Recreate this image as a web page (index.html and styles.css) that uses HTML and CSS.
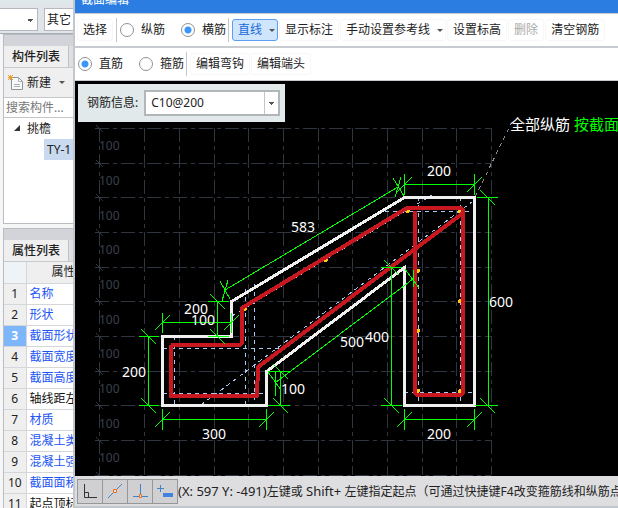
FILE: index.html
```html
<!DOCTYPE html>
<html lang="zh-CN">
<head>
<meta charset="utf-8">
<title>截面编辑</title>
<link rel="stylesheet" href="styles.css">
</head>
<body>
<div class="app">
  <header class="app-bar">
    <select class="combo combo-floor" aria-label="楼层"><option></option></select>
    <select class="combo combo-type" aria-label="构件类型"><option>其它</option></select>
  </header>
  <main class="side">
    <section class="panel">
      <div class="panel-grip"></div>
      <h2 class="tabs"><span class="tab">构件列表</span></h2>
      <div class="panel-tools">
        <button class="new-btn" type="button">
          <svg width="16" height="16" viewBox="0 0 16 16" aria-hidden="true">
            <path d="M3.500 2.500h7l4 4v8h-11z" fill="#f7f9fa" stroke="#8b969c"/>
            <path d="M10.500 2.500v4h4M6 9.500h6M6 11.500h6" fill="none" stroke="#a9b2b7"/>
            <path d="M0 0h1v1H0zM2 0h1v1H2zM4 0h1v1H4zM1 1h3v3H1zM0 2h1v1H0zM4 2h1v1H4zM0 4h1v1H0zM2 4h1v1H2zM4 4h1v1H4z" fill="#ee9c2b"/>
          </svg>
          新建<span class="caret"></span>
        </button>
      </div>
      <input class="search" type="text" placeholder="搜索构件..." aria-label="搜索构件">
      <ul class="tree">
        <li><span class="tree-parent"><svg width="7" height="7" viewBox="0 0 7 7" aria-hidden="true"><path d="M6 0v6H0z" fill="#333"/></svg>挑檐</span>
          <ul><li class="tree-leaf">TY-1</li></ul>
        </li>
      </ul>
    </section>
    <section class="panel">
      <div class="panel-grip"></div>
      <h2 class="tabs"><span class="tab">属性列表</span></h2>
      <table class="props">
        <thead><tr><th></th><th>属性名称</th></tr></thead>
        <tbody>
          <tr><th>1</th><td>名称</td></tr>
          <tr><th>2</th><td>形状</td></tr>
          <tr class="current"><th>3</th><td>截面形状</td></tr>
          <tr><th>4</th><td>截面宽度</td></tr>
          <tr><th>5</th><td>截面高度</td></tr>
          <tr class="plain"><th>6</th><td>轴线距左</td></tr>
          <tr><th>7</th><td>材质</td></tr>
          <tr><th>8</th><td>混凝土类</td></tr>
          <tr><th>9</th><td>混凝土强</td></tr>
          <tr><th>10</th><td>截面面积</td></tr>
          <tr class="plain"><th>11</th><td>起点顶标</td></tr>
        </tbody>
      </table>
    </section>
  </main>
</div>

<section class="dialog" aria-label="截面编辑">
  <h1 class="title">截面编辑</h1>
  <div class="toolbar">
    <button class="tool" type="button">选择</button>
    <span class="sep"></span>
    <label class="radio radio-long"><input type="radio" name="bar">纵筋</label>
    <label class="radio"><input type="radio" name="bar" checked>横筋</label>
    <span class="sep"></span>
    <button class="tool active" type="button">直线<span class="caret"></span></button>
    <button class="tool" type="button">显示标注</button>
    <button class="tool" type="button">手动设置参考线<span class="caret"></span></button>
    <button class="tool" type="button">设置标高</button>
    <button class="tool" type="button" disabled>删除</button>
    <button class="tool" type="button">清空钢筋</button>
  </div>
  <div class="toolbar toolbar-second">
    <label class="radio radio-long"><input type="radio" name="kind" checked>直筋</label>
    <label class="radio"><input type="radio" name="kind">箍筋</label>
    <span class="sep"></span>
    <button class="tool" type="button">编辑弯钩</button>
    <button class="tool" type="button">编辑端头</button>
  </div>
  <div class="canvas">
    <svg class="drawing" viewBox="75 81 543 395" preserveAspectRatio="xMinYMin slice" role="img" aria-label="挑檐截面">
      <g class="grid">
        <path d="M99.500 128V475M144.500 128V475M179.500 128V475M214.500 128V475M248.500 128V475M283.500 128V475M318.500 128V475M352.500 128V475M387.500 128V475M422.500 128V475M456.500 128V475M491.500 128V475"/>
        <path d="M95 128.500H491M95 163.500H491M95 197.500H491M95 232.500H491M95 267.500H491M95 301.500H491M95 336.500H491M95 371.500H491M95 405.500H491M95 440.500H491M95 475.500H491"/>
      </g>
      <path class="grid-tick" d="M96 125l7 7M96 160l7 7M96 194l7 7M96 229l7 7M96 264l7 7M96 298l7 7M96 333l7 7M96 368l7 7M96 402l7 7M96 437l7 7M96 472l7 7"/>
      <g class="grid-text">
        <text x="99" y="150">100</text><text x="99" y="185">100</text><text x="99" y="220">100</text><text x="99" y="254">100</text><text x="99" y="289">100</text><text x="99" y="324">100</text><text x="99" y="358">100</text><text x="99" y="393">100</text><text x="99" y="428">100</text><text x="99" y="462">100</text>
      </g>
      <path class="leader" d="M475 197L511 124"/>
      <path class="guide" d="M174.500 336V405M163 348.500H284M163 393.500H266M245.500 289V405M254.500 284V405M418.500 197V405M460.500 197V405M385 211.500H475M404 392.500H475M201 405L472 202M232 316L432 195"/>
      <path class="outline" d="M162.500 336.500H231.500V301.500L404.500 197.500H474.500V405.500H404.500V267.500L266.500 371.500V405.500H162.500Z"/>
      <g class="spots">
        <circle cx="245" cy="309" r="2"/><circle cx="326" cy="260" r="2"/><circle cx="408" cy="211" r="2"/><circle cx="418" cy="271" r="2"/><circle cx="460" cy="301" r="2"/><circle cx="418" cy="331" r="2"/><circle cx="418" cy="391" r="2"/><circle cx="460" cy="391" r="2"/><circle cx="460" cy="211" r="2"/>
      </g>
      <path class="rebar" d="M171 345H240L242 343V308L407 208H461L463 210V393L461 395H417L415 393V211M463 213L258 367L257 396H171V345"/>
      <g class="dim">
        <path d="M404.500 184.500H474.500M404.500 174V195M474.500 174V195M397 192l15-15M467 192l15-15"/>
        <path d="M488.500 197.500V405.500M477 197.500h21M475 405.500h23M480 190l15 15M480 398l15 15"/>
        <path d="M404.500 419.500H474.500M404.500 409V430M474.500 409V430M397 427l15-15M467 427l15-15"/>
        <path d="M162.500 419.500H266.500M162.500 409V430M266.500 409V430M155 427l15-15M259 427l15-15"/>
        <path d="M148.500 336.500V405.500M139 336.500h20M139 405.500h20M141 329l15 15M141 398l15 15"/>
        <path d="M162.500 322.500H231.500M162.500 313V333M231.500 313V333M155 330l15-15M224 330l15-15"/>
        <path d="M217.500 301.500V336.500M208 301.500h21M208 336.500h21M210 294l15 15M210 329l15 15"/>
        <path d="M280.500 371.500V405.500M268 371.500h22M268 405.500h22M273 364l15 15M273 398l15 15"/>
        <path d="M391.500 267.500V405.500M381 267.500h21M381 405.500h21M384 260l15 15M384 398l15 15"/>
        <path d="M225 290L398 187M220 281l10 18M393 178l11 18M228 280l-6 21M401 177l-6 20"/>
        <path d="M275 383L413 279M268 372l13 18M405 269l14 19M275 372v24M413 270v17"/>
      </g>
      <g class="dim-text">
        <text x="427" y="176">200</text><text x="489" y="307">600</text><text x="427" y="439">200</text><text x="202" y="439">300</text><text x="122" y="377">200</text><text x="184" y="314">200</text><text x="191" y="325">100</text><text x="281" y="394">100</text><text x="365" y="342">400</text><text x="340" y="347">500</text><text x="291" y="232">583</text>
      </g>
      <text class="note" x="510" y="130">全部纵筋</text>
      <text class="note note-link" x="574" y="130">按截面</text>
    </svg>
    <div class="info">
      <label for="rebar-info">钢筋信息:</label>
      <select id="rebar-info" class="combo combo-info"><option>C10@200</option></select>
    </div>
  </div>
  <footer class="status">
    <button class="snap" type="button" aria-label="正交"><svg width="18" height="18" viewBox="0 0 18 18"><path d="M3.500 2v13.500H16M3.500 10.500h4v5" fill="none" stroke="#333"/></svg></button>
    <button class="snap" type="button" aria-label="中点"><svg width="18" height="18" viewBox="0 0 18 18"><path d="M2 16L16 2" stroke="#3f83cc"/><path d="M7.500 7.500h3v3h-3z" fill="#dedee0" stroke="#f0701c"/></svg></button>
    <button class="snap" type="button" aria-label="垂点"><svg width="18" height="18" viewBox="0 0 18 18"><path d="M9.500 2v13M2 14.500h15" stroke="#3f83cc"/><path d="M8.500 12.500h2v3h-2z" fill="#dedee0" stroke="#f0701c"/></svg></button>
    <button class="snap" type="button" aria-label="动态输入"><svg width="18" height="18" viewBox="0 0 18 18"><path d="M1 6.500h7M4.500 3v7" stroke="#3f83cc"/><path d="M7 11h10v4H7z" fill="#3f83dc"/></svg></button>
    <span class="hint"><span class="keys">(X: 597 Y: -491)</span>左键或<span class="keys"> Shift+ </span>左键指定起点（可通过快捷键F4改变箍筋线和纵筋点</span>
  </footer>
</section>
</body>
</html>
```
FILE: styles.css
```css
* { box-sizing: border-box; }
body {
  margin: 0;
  height: 100vh;
  overflow: hidden;
  position: relative;
  background: #f6f6f7;
  color: #222;
  font: 12px/16px "Noto Sans", "Noto Sans CJK SC", sans-serif;
}
button, input, select { font: inherit; color: inherit; margin: 0; }
button { border: 0; padding: 0; background: none; white-space: nowrap; }
h1, h2, ul { margin: 0; padding: 0; font: inherit; list-style: none; }

.caret {
  border: 3px solid transparent;
  border-top-color: #555;
  border-bottom: 0;
}

/* Main window behind the dialog */
.app-bar {
  display: flex;
  gap: 6px;
  height: 34px;
  padding: 4px 0 2px;
  border-top: 4px solid #dfe8ea;
  border-bottom: 1px solid #a8adb5;
  background: #e1e4e9;
}
.combo {
  appearance: none;
  height: 23px;
  border: 1px solid #b4b8bd;
  border-radius: 0;
  background: #fff;
}
.combo-floor {
  width: 38px;
  border-left: 0;
  background-image: linear-gradient(to bottom left, #555 50%, transparent 50%), linear-gradient(to bottom right, #555 50%, transparent 50%);
  background-size: 3px 3px;
  background-position: 27px 10px, 30px 10px;
  background-repeat: no-repeat;
}
.combo-type { width: 80px; padding: 0 2px; }
.side { padding-left: 3px; }
.panel { width: 240px; margin-bottom: 4px; border: 1px solid #b9bcc0; }
.panel-grip { height: 11px; background: #d3d4da; }
.tabs { display: flex; height: 22px; background: #dfdfe1; border-bottom: 1px solid #c8cacd; }
.tab {
  padding: 3px 8px;
  border-right: 1px solid #c0c2c5;
  background: #efefef;
  font-weight: 500;
}
.panel-tools { display: flex; height: 30px; padding: 0 4px; background: #efefef; border-bottom: 1px solid #c4c7ca; }
.new-btn { display: flex; align-items: center; gap: 3px; }
.new-btn .caret { margin-left: 5px; }
.search { display: block; width: 100%; height: 20px; border: 0; border-bottom: 1px solid #c4c7ca; padding: 0 2px; background: #fff; }
.search::placeholder { color: #777; opacity: 1; }
.tree { height: 105px; background: #fff; }
.tree-parent { display: flex; align-items: center; gap: 6px; height: 21px; padding-left: 10px; }
.tree-leaf { height: 21px; margin-left: 40px; padding: 3px; line-height: 15px; background: #c9d9ef; }

.props { width: 100%; border-collapse: collapse; background: #fff; }
.props th, .props td { height: 21px; padding: 0 3px; border-bottom: 1px solid #d5d6d8; line-height: 20px; }
.props th { width: 22px; padding: 0; font-weight: 400; background: #efefef; border-right: 1px solid #d5d6d8; }
.props td { color: #1b55f5; }
.props thead th:first-child { background: #eef3f8; }
.props thead th + th { width: auto; padding-left: 25px; text-align: left; }
.props .plain td { color: #111; }
.props .current th { background: #7db6fa; color: #fff; font-weight: 700; }

/* Section editor dialog, floating over the main window */
.dialog {
  position: absolute;
  top: -14px;
  right: 0;
  bottom: 0;
  left: 73px;
  display: flex;
  flex-direction: column;
  border: solid #c2c7cd;
  border-width: 0 0 2px 2px;
  background: #fff;
}
.title { flex: none; height: 27px; padding: 6px; background: #2b7de1; color: #fff; font-size: 12px; line-height: 16px; }
.toolbar {
  flex: none;
  display: flex;
  align-items: center;
  height: 35px;
  padding: 0 2px;
  border-top: 1px solid #c8ccd2;
  border-bottom: 2px solid #c8cbd0;
  white-space: nowrap;
}
.toolbar-second { height: 33px; padding: 0 3px; border-top: 0; border-bottom-width: 1px; }
.tool {
  flex: none;
  display: flex;
  align-items: center;
  gap: 7px;
  height: 22px;
  margin-right: 1px;
  padding: 0 5px;
  border: 1px solid #f7f7f7;
  border-radius: 3px;
}
.tool:disabled { color: #aaa; }
.tool .caret { margin-right: -3px; }
.tool.active { border-color: #5b9ff0; background: #cfe5fc; color: #1569dc; }
.sep { width: 1px; height: 24px; margin: 0 3px 0 2px; background: #c3c6ca; }
.radio { display: flex; align-items: center; gap: 7px; }
.radio-long { margin-right: 16px; }
.radio input {
  appearance: none;
  width: 14px;
  height: 14px;
  border: 1px solid #8f9296;
  border-radius: 50%;
  background: #fff;
}
.radio input:checked { background: radial-gradient(circle, #3c96fa 3px, #fff 4px); }

.canvas { position: relative; flex: 1; min-height: 0; overflow: hidden; background: #000; }
.drawing { display: block; width: 100%; height: 100%; shape-rendering: crispEdges; }
.info {
  position: absolute;
  top: 3px;
  left: 3px;
  display: flex;
  align-items: center;
  gap: 6px;
  height: 38px;
  padding: 0 5px 0 9px;
  background: #e1e9eb;
}
.combo-info {
  width: 136px;
  height: 26px;
  padding: 0 5px;
  border: 2px solid #b1b6b8;
  background-image: linear-gradient(to bottom left, #555 50%, transparent 50%), linear-gradient(to bottom right, #555 50%, transparent 50%), linear-gradient(#c2c6c8, #c2c6c8);
  background-position: 123px 10px, 126px 10px, 118px 0;
  background-size: 3px 3px, 3px 3px, 1px 100%;
  background-repeat: no-repeat;
}
.grid path { fill: none; stroke: #303640; stroke-dasharray: 14 4 4 4; }
.grid-tick { stroke: #303640; }
.grid-text { fill: #3b414c; font-size: 12px; }
.leader { stroke: #8c8c8c; stroke-dasharray: 4 4; }
.guide { fill: none; stroke: #a9c9f2; stroke-dasharray: 4 4; }
.outline { fill: none; stroke: #f0f0f0; stroke-width: 3; }
.rebar { fill: none; stroke: #c8171e; stroke-width: 4; stroke-linejoin: round; }
.spots { fill: #ffc91f; }
.dim { fill: none; stroke: #0f0; }
.dim-text { fill: #fff; font-size: 14px; }
.note { fill: #fff; font-size: 15px; }
.note-link { fill: #0f0; }

.status { flex: none; display: flex; align-items: center; height: 30px; padding-left: 2px; background: #dedee0; overflow: hidden; white-space: nowrap; }
.snap { flex: none; display: grid; place-items: center; width: 26px; height: 25px; margin-right: -1px; border: 1px solid #969799; background: #d0d0d2; }
.hint { margin-left: 1px; }
.keys { font-size: 13px; white-space: pre; }
```
